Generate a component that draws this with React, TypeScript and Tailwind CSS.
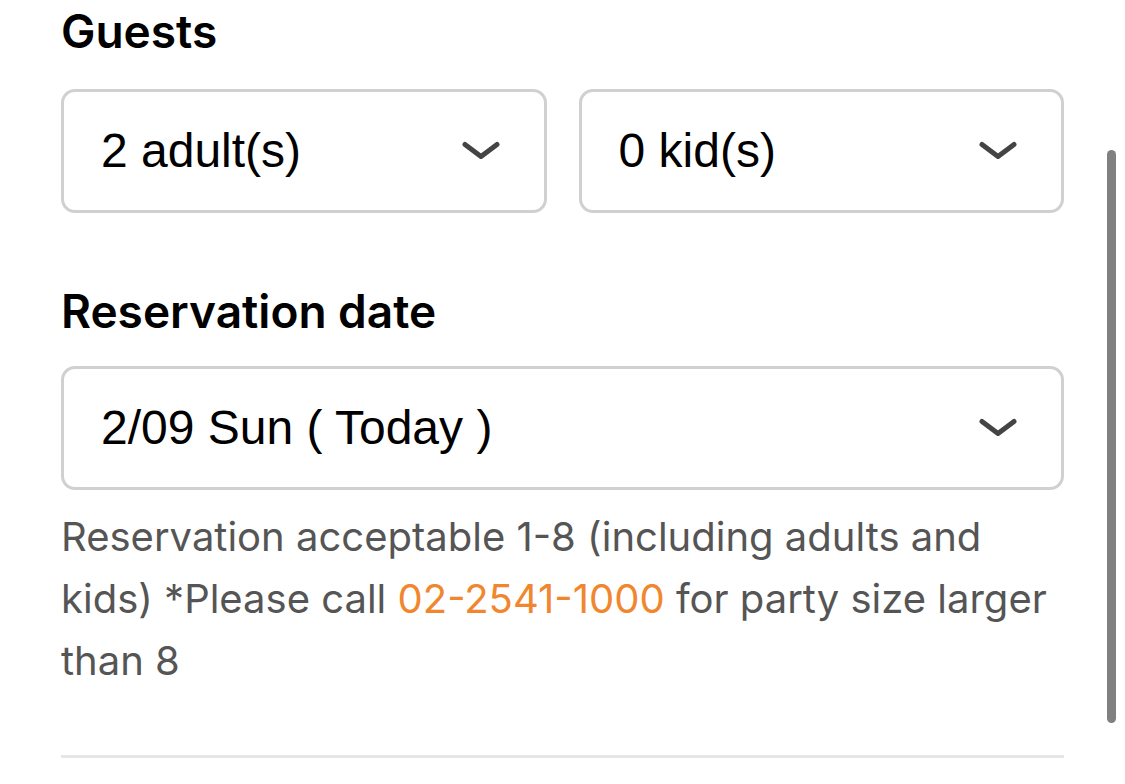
import React from "react";

function Chevron() {
  return (
    <svg width="38" height="20" viewBox="0 0 38 20" fill="none">
      <path d="M3 3.5 L19 15.5 L35 3.5" stroke="#444" strokeWidth="5" strokeLinecap="round" strokeLinejoin="round" />
    </svg>
  );
}

function Select({ label, className = "" }: { label: string; className?: string }) {
  return (
    <div
      className={
        "flex h-[124px] items-center justify-between rounded-[14px] border-[3px] border-[#d0d0d0] bg-white pl-[37px] pr-[44px] " +
        className
      }
    >
      <span className="text-[48px] leading-none text-black" style={{ fontFamily: '"Liberation Sans", Arial, sans-serif' }}>
        {label}
      </span>
      <Chevron />
    </div>
  );
}

export default function App() {
  return (
    <div className="relative h-[784px] w-[1125px] overflow-hidden bg-white" style={{ fontFamily: 'Inter, "Noto Sans", sans-serif' }}>
      <div className="ml-[61px] w-[1003px] pt-[7px]">
        <h2 className="text-[46px] font-semibold leading-[48px] text-black">Guests</h2>
        <div className="mt-[34px] grid grid-cols-2 gap-[32px]">
          <Select label="2 adult(s)" />
          <Select label="0 kid(s)" />
        </div>
        <h2 className="mt-[74px] text-[46px] font-semibold leading-[48px] text-black">Reservation date</h2>
        <Select label="2/09 Sun ( Today )" className="mt-[31px]" />
        <p className="mt-[16px] text-[40px] leading-[62px] text-[#555]">
          Reservation acceptable 1-8 (including adults and kids) *Please call{" "}
          <span className="text-[#f0872f]">02-2541-1000</span> for party size larger than 8
        </p>
        <div className="mt-[63px] h-[3px] w-full bg-[#e6e6e6]" />
      </div>
      <div className="absolute left-[1107px] top-[150px] h-[573px] w-[9px] rounded-full bg-[#808080]" />
    </div>
  );
}
